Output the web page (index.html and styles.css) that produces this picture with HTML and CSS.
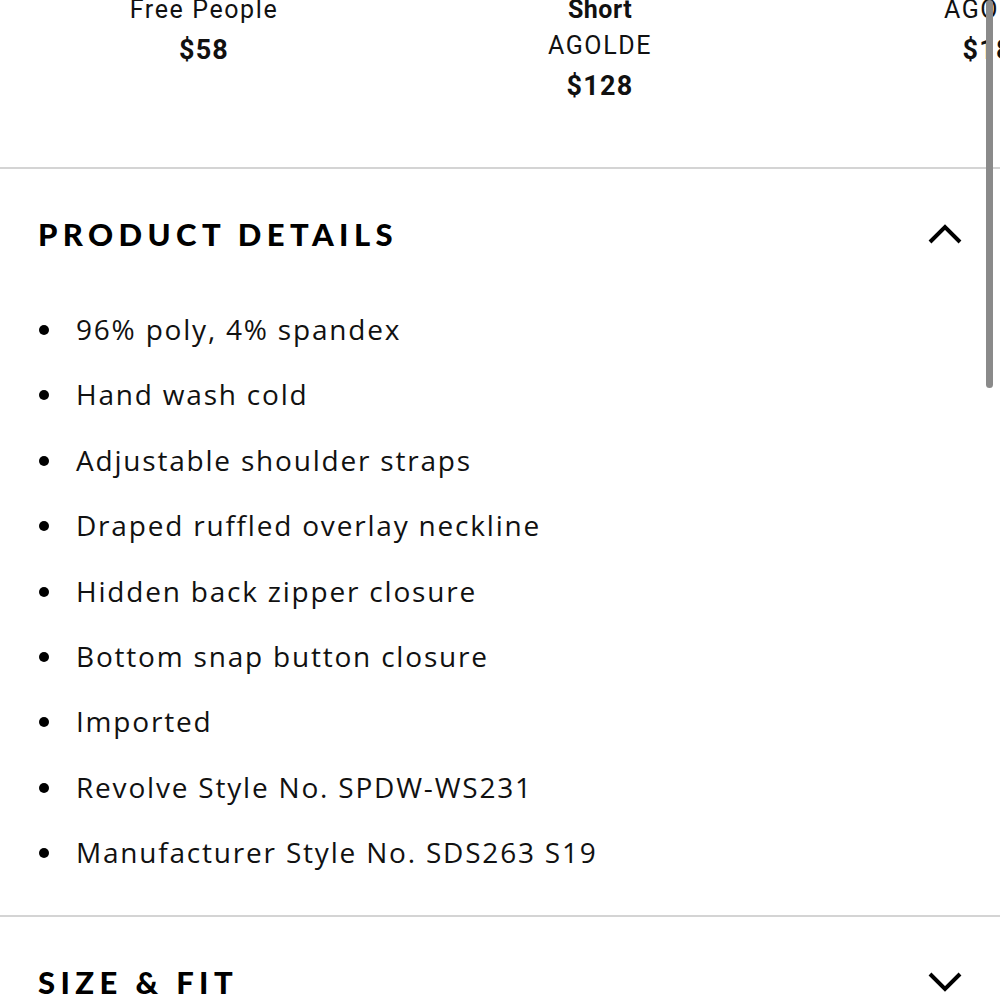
FILE: index.html
```html
<!DOCTYPE html>
<html lang="en">
<head>
<meta charset="utf-8">
<title>Product Details</title>
<link rel="stylesheet" href="styles.css">
</head>
<body>
<div class="page">
  <div class="carousel">
    <div class="product">
      <div class="brand">Free People</div>
      <div class="price">$58</div>
    </div>
    <div class="product">
      <div class="name">Short</div>
      <div class="brand">AGOLDE</div>
      <div class="price">$128</div>
    </div>
    <div class="product">
      <div class="brand">AGOLDE</div>
      <div class="price">$188</div>
    </div>
  </div>

  <section class="accordion">
    <div class="acc-head">
      <h2 class="acc-title">PRODUCT DETAILS</h2>
      <svg class="chev" width="34" height="22" viewBox="0 0 34 22"><polyline points="2,19 17,4 32,19" fill="none" stroke="#000" stroke-width="4"/></svg>
    </div>
    <ul class="details">
      <li>96% poly, 4% spandex</li>
      <li>Hand wash cold</li>
      <li>Adjustable shoulder straps</li>
      <li>Draped ruffled overlay neckline</li>
      <li>Hidden back zipper closure</li>
      <li>Bottom snap button closure</li>
      <li>Imported</li>
      <li>Revolve Style No. SPDW-WS231</li>
      <li>Manufacturer Style No. SDS263 S19</li>
    </ul>
  </section>

  <section class="accordion">
    <div class="acc-head">
      <h2 class="acc-title">SIZE &amp; FIT</h2>
      <svg class="chev" width="34" height="22" viewBox="0 0 34 22"><polyline points="2,3 17,18 32,3" fill="none" stroke="#000" stroke-width="4"/></svg>
    </div>
  </section>

  <div class="scrollbar"></div>
</div>
</body>
</html>
```

FILE: styles.css
```css
html, body {
  margin: 0;
  padding: 0;
  background: #fff;
}
body {
  width: 1000px;
  height: 1000px;
  overflow: hidden;
  font-family: "Open Sans", "Liberation Sans", sans-serif;
  color: #111;
}
.page {
  position: relative;
  display: flow-root;
}
.carousel {
  display: flex;
  margin-top: -8px;
  height: 175px;
  padding-left: 6px;
  overflow: hidden;
}
.product {
  flex: 0 0 396px;
  text-align: center;
  font-family: "Roboto", sans-serif;
  font-size: 25px;
}
.product .name {
  line-height: 36px;
  font-weight: 700;
  letter-spacing: 0.5px;
}
.product .brand {
  line-height: 36px;
  letter-spacing: 1.6px;
}
.product .price {
  line-height: 36px;
  margin-top: 4px;
  font-size: 27px;
  font-weight: 700;
  letter-spacing: 1.2px;
}
.accordion {
  border-top: 2px solid #d4d4d4;
}
.acc-head {
  height: 134px;
  display: flex;
  align-items: center;
  justify-content: space-between;
  padding: 0 38px 4px 38px;
  box-sizing: border-box;
}
.acc-title {
  margin: 0;
  font-family: "Lato", sans-serif;
  font-weight: 900;
  font-size: 31px;
  letter-spacing: 5.4px;
  color: #000;
}
.chev {
  display: block;
}
.details {
  list-style: none;
  margin: -6px 0 0 0;
  padding: 0 0 29px 0;
}
.details li {
  position: relative;
  line-height: 65.4px;
  font-size: 28px;
  padding-left: 76px;
  letter-spacing: 1.8px;
  color: #111;
}
.details li::before {
  content: "";
  position: absolute;
  left: 39px;
  top: 28px;
  width: 10px;
  height: 10px;
  border-radius: 50%;
  background: #000;
}
.scrollbar {
  position: absolute;
  top: 0;
  left: 986px;
  width: 7px;
  height: 388px;
  border-radius: 4px;
  background: #8a8a8a;
}
```
